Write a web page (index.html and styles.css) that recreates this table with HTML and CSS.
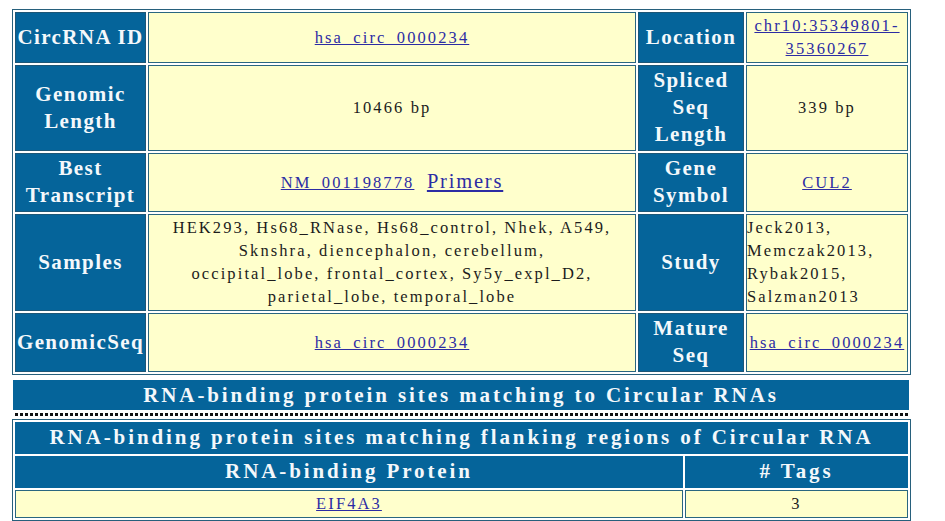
FILE: index.html
```html
<!DOCTYPE html>
<html>
<head>
<meta charset="utf-8">
<link rel="stylesheet" href="styles.css">
</head>
<body>
<div class="page">
  <table class="info">
    <colgroup>
      <col class="c1"><col class="c2"><col class="c3"><col class="c4">
    </colgroup>
    <tr>
      <th>CircRNA ID</th>
      <td><a href="#">hsa_circ_0000234</a></td>
      <th>Location</th>
      <td><a href="#">chr10:35349801-35360267</a></td>
    </tr>
    <tr>
      <th>Genomic Length</th>
      <td>10466 bp</td>
      <th>Spliced Seq Length</th>
      <td>339 bp</td>
    </tr>
    <tr>
      <th>Best Transcript</th>
      <td><a href="#">NM_001198778</a>&nbsp; <a href="#" class="big">Primers</a></td>
      <th>Gene Symbol</th>
      <td><a href="#">CUL2</a></td>
    </tr>
    <tr>
      <th>Samples</th>
      <td>HEK293, Hs68_RNase, Hs68_control, Nhek, A549,<br>Sknshra, diencephalon, cerebellum,<br>occipital_lobe, frontal_cortex, Sy5y_expl_D2,<br>parietal_lobe, temporal_lobe</td>
      <th>Study</th>
      <td class="left">Jeck2013, Memczak2013, Rybak2015, Salzman2013</td>
    </tr>
    <tr>
      <th>GenomicSeq</th>
      <td><a href="#">hsa_circ_0000234</a></td>
      <th>Mature Seq</th>
      <td><a href="#">hsa_circ_0000234</a></td>
    </tr>
  </table>

  <div class="bar">RNA-binding protein sites matching to Circular RNAs</div>
  <div class="dots"></div>

  <table class="rbp">
    <colgroup>
      <col class="p1"><col class="p2">
    </colgroup>
    <tr class="title-row">
      <th colspan="2">RNA-binding protein sites matching flanking regions of Circular RNA</th>
    </tr>
    <tr class="head-row">
      <th>RNA-binding Protein</th>
      <th># Tags</th>
    </tr>
    <tr class="data-row">
      <td><a href="#">EIF4A3</a></td>
      <td>3</td>
    </tr>
  </table>
</div>
</body>
</html>
```

FILE: styles.css
```css
html, body {
  margin: 0;
  padding: 0;
  background: #ffffff;
}

.page {
  padding: 9px 0 0 12px;
  font-family: "Liberation Serif", "Times New Roman", serif;
}

table {
  border-collapse: separate;
  border-spacing: 2px;
  border: 1px solid #27607c;
  table-layout: fixed;
}

.info {
  width: 899px;
}

.info col.c1 { width: 131px; }
.info col.c2 { width: 488px; }
.info col.c3 { width: 106px; }
.info col.c4 { width: 162px; }

th {
  background: #05649a;
  color: #f4f8fb;
  font-family: "Liberation Serif", "Times New Roman", serif;
  font-weight: bold;
  font-size: 21px;
  letter-spacing: 1.4px;
  line-height: 27px;
  border: 1px solid #1d5676;
  padding: 1px 0 2px;
  text-align: center;
  vertical-align: middle;
}

td {
  background: #ffffcc;
  color: #1c1c1c;
  font-family: "Liberation Serif", "Times New Roman", serif;
  font-size: 16.5px;
  letter-spacing: 2.1px;
  line-height: 23px;
  border: 1px solid #2a6680;
  padding: 1px 0 2px;
  text-align: center;
  vertical-align: middle;
}

td.left {
  text-align: left;
}

a {
  color: #2c2ca4;
  text-decoration: underline;
}

a.big {
  font-size: 20.5px;
  letter-spacing: 1.8px;
}

.bar {
  width: 896px;
  height: 30px;
  margin: 5px 0 0 1px;
  background: #05649a;
  color: #f4f8fb;
  font-weight: bold;
  font-size: 21px;
  letter-spacing: 2.9px;
  line-height: 30px;
  text-align: center;
}

.dots {
  width: 893px;
  height: 3px;
  margin: 3px 0 0 3px;
  background-image: repeating-linear-gradient(90deg, #111111 0, #111111 3px, transparent 3px, transparent 5px);
}

.rbp {
  width: 899px;
  margin-top: 3px;
}

.rbp col.p1 { width: 668px; }
.rbp col.p2 { width: 223px; }

.rbp th {
  letter-spacing: 2.9px;
  border-color: #05649a;
}
```
